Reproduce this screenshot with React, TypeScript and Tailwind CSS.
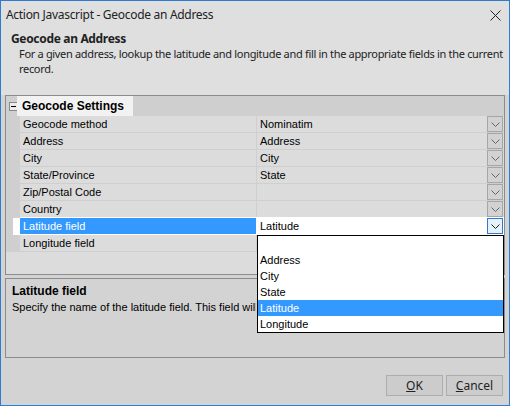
import React from 'react';

const rows: [string, string][] = [
  ['Geocode method', 'Nominatim'],
  ['Address', 'Address'],
  ['City', 'City'],
  ['State/Province', 'State'],
  ['Zip/Postal Code', ''],
  ['Country', ''],
  ['Latitude field', 'Latitude'],
  ['Longitude field', ''],
];

const options = ['', 'Address', 'City', 'State', 'Latitude', 'Longitude'];

const Chevron: React.FC<{ color?: string }> = ({ color = '#555' }) => (
  <svg width="9" height="5" viewBox="0 0 9 5">
    <path d="M0.5 0.5 L4.5 4.5 L8.5 0.5" fill="none" stroke={color} strokeWidth="1" />
  </svg>
);

const DropButton: React.FC<{ active?: boolean }> = ({ active }) => (
  <div
    className={
      'w-[16px] h-[16px] flex items-center justify-center border ' +
      (active ? 'border-[#2f7ad0] bg-[#e5f1fb]' : 'border-[#a6a6a6] bg-[#d2d2d2]')
    }
  >
    <Chevron color={active ? '#222' : '#666'} />
  </div>
);

const App: React.FC = () => {
  return (
    <div className="w-[510px] h-[406px] bg-[#d3d3d3] border border-[#2e7bcf] flex flex-col relative font-['Liberation_Sans',Arial,sans-serif] text-[11px] text-black overflow-hidden">
      {/* title bar */}
      <div className="h-[28px] bg-[#dfdfdf] flex items-center justify-between pl-[5px] pr-[8px] font-['Noto_Sans',sans-serif] text-[12px] text-[#222]">
        <span className="tracking-[-0.3px]">Action Javascript - Geocode an Address</span>
        <svg width="11" height="11" viewBox="0 0 11 11">
          <path d="M0.5 0.5 L10.5 10.5 M10.5 0.5 L0.5 10.5" stroke="#222" strokeWidth="1" />
        </svg>
      </div>

      {/* header */}
      <div className="h-[66px] bg-[#dfdfdf] pt-[2px] font-['Noto_Sans',sans-serif] text-[11px] text-[#222]">
        <div className="pl-[10px] font-bold text-[12px] leading-[15px] tracking-[-0.33px]">Geocode an Address</div>
        <div className="pl-[18px] leading-[15px] whitespace-nowrap tracking-[-0.32px]">
          For a given address, lookup the latitude and longitude and fill in the appropriate fields in the current
        </div>
        <div className="pl-[18px] leading-[15px] tracking-[-0.32px]">record.</div>
      </div>

      {/* property grid */}
      <div className="mx-[4px] h-[180px] border border-[#8c8c8c] bg-[#dcdcdc] flex flex-col">
        <div className="h-[20px] bg-[#cfcfcf] flex items-center">
          <div className="w-[14px] flex justify-center">
            <div className="w-[9px] h-[9px] border border-[#8a8a8a] bg-[#ececec] flex items-center justify-center">
              <div className="w-[5px] h-px bg-black" />
            </div>
          </div>
          <div className="h-[20px] ml-[-3px] pl-[5px] pr-[9px] bg-[#f2f2f2] flex items-center font-bold text-[12px]">
            Geocode Settings
          </div>
        </div>
        {rows.map(([name, value], i) => {
          const sel = i === 6;
          return (
            <div key={name} className="flex h-[17px]">
              <div className="w-[14px] bg-[#cfcfcf] flex">
                {sel && <div className="ml-[7px] w-[7px] bg-white" />}
              </div>
              <div className="flex-1 flex flex-col">
                <div className="h-[16px] flex">
                  <div
                    className={
                      'w-[236px] pl-[3px] flex items-center whitespace-nowrap ' +
                      (sel ? 'bg-[#3399ff] text-white' : '')
                    }
                  >
                    {name}
                  </div>
                  <div className={'w-px ' + (sel ? 'bg-white' : 'bg-[#cfcfcf]')} />
                  <div className={'flex-1 flex items-center justify-between pl-[3px] pr-px ' + (sel ? 'bg-white' : '')}>
                    <span>{value}</span>
                    <DropButton active={sel} />
                  </div>
                </div>
                <div className={'h-px ' + (i === 5 || sel ? 'bg-white' : 'bg-[#cfcfcf]')} />
              </div>
            </div>
          );
        })}
      </div>

      {/* help panel */}
      <div className="mx-[4px] mt-[3px] h-[80px] border border-[#8c8c8c] bg-[#d3d3d3] px-[6px] pt-[5px]">
        <div className="font-bold text-[12px] leading-[15px]">Latitude field</div>
        <div className="w-[244px] overflow-hidden leading-[16px] whitespace-nowrap">
          Specify the name of the latitude field. This field will be updated with the result.
        </div>
      </div>

      {/* buttons */}
      <div className="mt-[17px] flex justify-end gap-[3px] pr-[6px] font-['Noto_Sans',sans-serif] text-[12px] text-[#222]">
        <button className="w-[57px] h-[21px] bg-[#cccccc] border border-[#adadad] flex items-center justify-center">
          <span><span className="underline">O</span>K</span>
        </button>
        <button className="w-[57px] h-[21px] bg-[#cccccc] border border-[#adadad] flex items-center justify-center">
          <span><span className="underline">C</span>ancel</span>
        </button>
      </div>

      {/* open dropdown list */}
      <div className="absolute left-[256px] top-[234px] w-[247px] h-[98px] bg-white border border-black flex flex-col">
        {options.map((o) => (
          <div
            key={o || 'blank'}
            className={
              'h-[16px] pl-[2px] flex items-center ' + (o === 'Latitude' ? 'bg-[#3399ff] text-white' : '')
            }
          >
            {o}
          </div>
        ))}
      </div>
    </div>
  );
};

export default App;
